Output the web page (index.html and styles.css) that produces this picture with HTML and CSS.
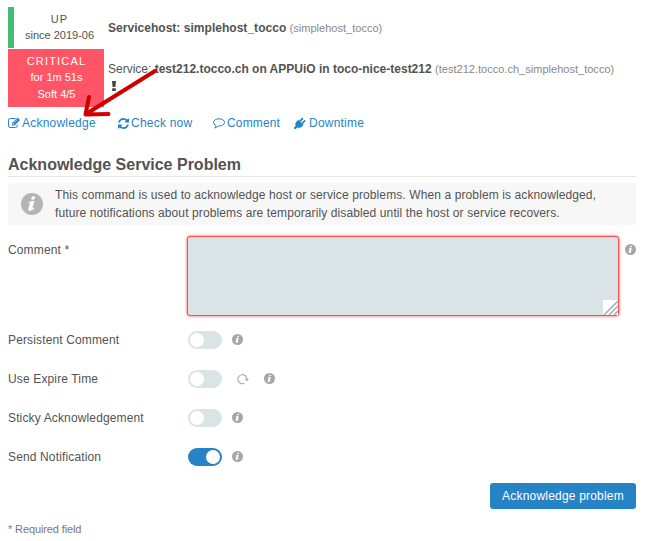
FILE: index.html
```
<!DOCTYPE html>
<html lang="en">
<head>
<meta charset="utf-8">
<title>Acknowledge Service Problem</title>
<link rel="stylesheet" href="styles.css">
</head>
<body>
<svg class="defs" width="0" height="0">
  <symbol id="info" viewBox="0 0 22 22">
    <circle cx="11" cy="11" r="11"/>
    <path fill="#fff" d="M11.600 3.600q2.600-.8 2.500 1-.3 2.200-2.400 2.200-1.900-.1-1.300-1.900.3-.9 1.200-1.300zM7.500 9.200Q10 7.800 13.500 8l-2 6.800q-.2 1.200 1.900-.3l.4.600q-2.800 3-5.400 2.800-1.500-.2-1-2.200l1.400-5q.3-1.200-1.300-.7z"/>
  </symbol>
</svg>
<main class="page">
  <section class="objects">
    <div class="object host">
      <div class="state up"><span class="state-name">UP</span><span>since 2019-06</span></div>
      <div class="title"><b>Servicehost: simplehost_tocco</b> <small>(simplehost_tocco)</small></div>
    </div>
    <div class="object service">
      <div class="state critical"><span class="state-name">CRITICAL</span><span>for 1m 51s</span><span>Soft 4/5</span></div>
      <div class="title">
        <div>Service: <b>test212.tocco.ch on APPUiO in toco-nice-test212</b> <small>(test212.tocco.ch_simplehost_tocco)</small></div>
        <svg class="unhandled" viewBox="0 0 6 12"><path d="M1 1h4l-.6 6H1.600zM1.200 8.300h3.600V11H1.200z"/></svg>
      </div>
    </div>
    <svg class="arrow" viewBox="0 0 90 60"><path d="M75 7 6 50M9 33 5.500 50.500l23-.5"/></svg>
  </section>
  <nav class="actions">
    <a class="ack"><svg width="12" height="12" viewBox="0 0 12 12"><path class="line" d="M7.500 1.500H2.200Q.5 1.500.5 3.200v5.600q0 1.700 1.700 1.700H7.500q1.700 0 1.700-1.700V7.500"/><path fill-rule="evenodd" d="M9.600.6 12 2.900 6.600 8.400H4.100V5.900zM5 6.400v1h1l.4-.4-1-1zM9.200 2.200 6.300 5.100l.3.3 2.900-2.900z"/></svg>Acknowledge</a>
    <a class="check"><svg width="11" height="11" viewBox="0 0 1536 1536"><path d="M1511 928q0 5-1 7-64 268-268 434.500t-478 166.500q-146 0-282.500-55t-243.500-157l-129 129q-19 19-45 19t-45-19-19-45v-448q0-26 19-45t45-19h448q26 0 45 19t19 45-19 45l-137 137q71 66 161 102t187 36q134 0 250-65t186-179q11-17 53-117 8-23 30-23h192q13 0 22.500 9.500t9.500 22.500zm25-800v448q0 26-19 45t-45 19h-448q-26 0-45-19t-19-45 19-45l138-138q-148-137-349-137-134 0-250 65t-186 179q-11 17-53 117-8 23-30 23h-199q-13 0-22.500-9.500t-9.500-22.500v-7q65-268 270-434.500t480-166.500q146 0 284 55.500t245 156.500l130-129q19-19 45-19t45 19 19 45z"/></svg>Check now</a>
    <a class="comment"><svg width="12" height="12" viewBox="0 0 12 12"><path class="line" d="M6 1.800C9 1.800 11.500 3.300 11.500 5.400S9 9 6 9H5.200Q3.700 10.700 1.800 11 3 9.800 3 8.500 .500 7.400 .500 5.400C.500 3.300 3 1.800 6 1.800z"/></svg>Comment</a>
    <a class="down"><svg width="12" height="12" viewBox="0 0 12 12"><path d="M4.200 2.900 5.200 3.800 7.700 1.100Q8.400.500 9 1.100T9 2.400L6.500 5 7.500 6 10 3.300Q10.700 2.700 11.300 3.300T11.300 4.600L8.700 7.200 9.600 8.100 8.600 9.100C7.200 10.700 5 11.300 3.300 10.500L1.900 11.900H.2V10.300L1.700 8.800C.8 7.100 1.500 5.200 3.200 3.800z"/></svg>Downtime</a>
  </nav>
  <h1>Acknowledge Service Problem</h1>
  <div class="hint">
    <svg width="22" height="22"><use href="#info"/></svg>
    <p>This command is used to acknowledge host or service problems. When a problem is acknowledged,<br>future notifications about problems are temporarily disabled until the host or service recovers.</p>
  </div>
  <form>
    <div class="field text-field">
      <label for="comment">Comment *</label>
      <div class="text-box">
        <textarea id="comment"></textarea>
        <svg class="grip" viewBox="0 0 15 15"><path d="M1 15 15 1M6 15l9-9M11 15l4-4"/></svg>
      </div>
      <svg class="info"><use href="#info"/></svg>
    </div>
    <div class="field"><label>Persistent Comment</label><span class="switch"></span><svg class="info"><use href="#info"/></svg></div>
    <div class="field"><label>Use Expire Time</label><span class="switch"></span><svg class="reload" viewBox="0 0 12 12"><path d="M7.500 10.200A4.500 4.500 0 1 1 9.900 6.500"/><path class="tip" d="M7.400 5.700h4.600L9.800 8.500z"/></svg><svg class="info"><use href="#info"/></svg></div>
    <div class="field"><label>Sticky Acknowledgement</label><span class="switch"></span><svg class="info"><use href="#info"/></svg></div>
    <div class="field"><label>Send Notification</label><span class="switch on"></span><svg class="info"><use href="#info"/></svg></div>
    <div class="submit"><button type="button">Acknowledge problem</button></div>
  </form>
  <p class="required">* Required field</p>
</main>
</body>
</html>
```
FILE: styles.css
```
* { box-sizing: border-box; }
body { margin: 0; background: #fff; color: #535353; font: 12px/18px "Liberation Sans", Arial, sans-serif; }
p, h1 { margin: 0; }
svg { display: block; flex: none; }
.defs { position: absolute; }
.page { width: 648px; height: 541px; padding: 7px 12px 0 8px; overflow: hidden; }
.objects { position: relative; display: grid; gap: 1px; }
.object { display: flex; }
.host { height: 41px; align-items: center; }
.service { height: 58px; }
.state { width: 96px; flex: none; display: flex; flex-direction: column; align-items: center; font-size: 11px; line-height: 16px; }
.state-name { letter-spacing: 1.2px; }
.up { height: 41px; padding: 4px 0 0 1px; border-left: 6px solid #44bb77; }
.critical { height: 58px; padding: 4px 0 0 1px; line-height: 17px; background: #ff5566; color: #fff; }
.critical .state-name { line-height: 16px; letter-spacing: 1.2px; }
.title { padding-left: 4px; white-space: nowrap; }
.host b { letter-spacing: 0.03px; }
.service .title { padding-top: 11px; }
small { font-size: 11px; letter-spacing: 0.02px; color: #888; }
.unhandled { width: 6px; height: 12px; margin: 2px 0 0 3px; fill: #444; }
.arrow { position: absolute; left: 80px; top: 57px; width: 90px; height: 60px; margin-left: -8px; fill: none; stroke: #d00000; stroke-width: 4; stroke-linecap: round; stroke-linejoin: round; }
.actions { display: flex; height: 18px; margin-top: 7px; color: #2583c6; letter-spacing: 0.22px; }
.actions a { display: flex; align-items: center; gap: 2px; }
.actions svg { fill: currentColor; }
.actions .line { fill: none; stroke: currentColor; }
.ack { width: 110px; }
.check { width: 95px; }
.actions .comment { width: 81px; letter-spacing: 0.15px; }
.actions .down { gap: 3px; }
h1 { height: 25px; margin-top: 20px; padding-top: 1px; border-bottom: 1px solid #e5e5e5; font-size: 16px; line-height: 24px; }
.hint { display: flex; align-items: center; height: 42px; margin-top: 6px; padding-left: 13px; gap: 12px; border-radius: 3px; background: #f7f7f7; letter-spacing: 0.109px; white-space: nowrap; }
.hint p { letter-spacing: 0.109px; }
.hint svg { fill: #b4b4b4; }
.field { display: flex; align-items: center; height: 39px; gap: 10px; }
.field label { width: 170px; letter-spacing: 0.14px; }
.text-field { align-items: flex-start; height: 84px; margin-top: 11px; gap: 0; }
.text-field label { width: 179px; padding-top: 5px; }
.text-box { position: relative; width: 432px; height: 80px; }
textarea { display: block; width: 100%; height: 100%; border: 1px solid #ff4e4e; border-radius: 3px; background: #dae3e6; box-shadow: 0 0 3px #ff4444; resize: none; }
.grip { position: absolute; right: 1px; bottom: 1px; width: 15px; height: 15px; background: #fff; fill: none; stroke: #aaa; stroke-width: 1.5; }
.info { width: 11px; height: 11px; fill: #a6a6a6; }
.text-field .info { margin: 8px 0 0 6px; }
.switch { display: flex; width: 34px; height: 18px; padding: 2px; border-radius: 9px; background: #dae3e6; }
.switch::before { content: ""; width: 14px; height: 14px; border-radius: 50%; background: #fff; }
.switch.on { justify-content: flex-end; background: #2583c6; }
.reload { width: 12px; height: 12px; margin: 0 5px 0 5px; fill: none; stroke: #b0b0b0; stroke-width: 1.2; }
.reload .tip { fill: #b0b0b0; stroke: none; }
.submit { display: flex; justify-content: flex-end; margin-top: 7px; }
button { width: 146px; height: 26px; padding: 0; border: 0; border-radius: 3px; background: #2583c6; color: #fff; font: inherit; letter-spacing: 0.2px; }
.required { margin-top: 11px; font-size: 11px; letter-spacing: -0.12px; color: #777; }
```
